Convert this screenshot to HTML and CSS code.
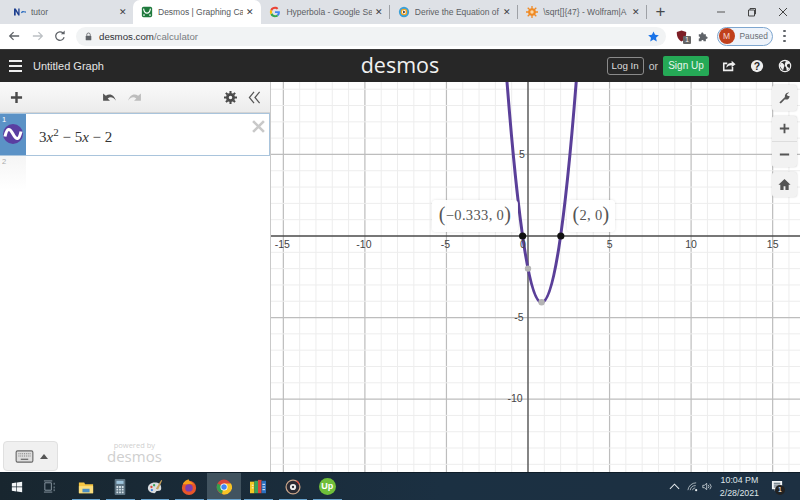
FILE: index.html
```html
<!DOCTYPE html>
<html lang="en">
<head>
<meta charset="utf-8">
<title>Desmos | Graphing Calculator</title>
<link rel="stylesheet" href="styles.css">
</head>
<body>
<div class="tabstrip">
  <div class="tab first">
    <svg class="favicon" viewBox="0 0 14 14"><path d="M0 11V3h2l3 5V3h1.500v8H5L2 6v5z" fill="#1d3f8f"/><path d="M8 7.500c1.500-2 3-2 5-1l1-.5v2c-2-1-3.500-1-5 .5z" fill="#2f6fc0"/></svg>
    <span class="tabtitle">tutor</span><span class="tabx">✕</span>
  </div>
  <div class="tab active">
    <svg class="favicon" viewBox="0 0 14 14"><rect x="1" y="1" width="12" height="12" rx="2" fill="#1f7a3d"/><path d="M3 3c1 7 7 7 8 0" fill="none" stroke="#fff" stroke-width="1.300"/><circle cx="3.500" cy="10.500" r="1" fill="#fff"/><circle cx="10.500" cy="10.500" r="1" fill="#fff"/></svg>
    <span class="tabtitle">Desmos | Graphing Ca</span><span class="tabx">✕</span>
  </div>
  <div class="tab">
    <svg class="favicon" viewBox="0 0 14 14"><path d="M12.700 7.200c0-.4 0-.8-.1-1.200H7v2.300h3.200c-.1.800-.6 1.400-1.200 1.800l1.900 1.500c1.100-1 1.800-2.500 1.800-4.400z" fill="#4285f4"/><path d="M7 13c1.600 0 3-.5 3.900-1.400L9 10.100c-.5.400-1.200.6-2 .6-1.500 0-2.800-1-3.300-2.400l-2 1.500C2.700 11.800 4.700 13 7 13z" fill="#34a853"/><path d="M3.700 8.300C3.500 7.600 3.500 6.400 3.700 5.700l-2-1.500c-.9 1.700-.9 3.900 0 5.600z" fill="#fbbc05"/><path d="M7 3.300c.9 0 1.600.3 2.200.9l1.700-1.700C9.900 1.600 8.600 1 7 1 4.700 1 2.700 2.200 1.700 4.200l2 1.500C4.200 4.300 5.500 3.300 7 3.300z" fill="#ea4335"/></svg>
    <span class="tabtitle">Hyperbola - Google Se</span><span class="tabx">✕</span><i class="tabsep"></i>
  </div>
  <div class="tab">
    <svg class="favicon" viewBox="0 0 14 14"><circle cx="7" cy="7" r="6" fill="#3aa0d8"/><circle cx="7" cy="7" r="3.800" fill="#f5a623"/><circle cx="7" cy="7" r="2.400" fill="#fff"/><path d="M6 5.200 9 7l-3 1.800z" fill="#333"/></svg>
    <span class="tabtitle">Derive the Equation of</span><span class="tabx">✕</span><i class="tabsep"></i>
  </div>
  <div class="tab">
    <svg class="favicon" viewBox="0 0 14 14"><g stroke="#f08a24" stroke-width="1.500"><path d="M7 0v14M0 7h14M2 2l10 10M12 2 2 12"/></g><circle cx="7" cy="7" r="4.500" fill="#f08a24"/><circle cx="7" cy="7" r="2" fill="#fbd9a8"/></svg>
    <span class="tabtitle">\sqrt[]{47} - Wolfram|A</span><span class="tabx">✕</span><i class="tabsep"></i>
  </div>
  <span class="newtab">+</span>
  <div class="winctl">
    <svg viewBox="0 0 10 10"><path d="M1 5h8" stroke="#555" stroke-width="1"/></svg>
    <svg viewBox="0 0 10 10"><path d="M1.500 3h6v6h-6zM3 3V1.500h5.500V7H7.500" fill="none" stroke="#444" stroke-width="1"/></svg>
    <svg viewBox="0 0 10 10"><path d="M1 1l8 8M9 1 1 9" stroke="#444" stroke-width="1"/></svg>
  </div>
</div>

<div class="toolbar">
  <svg class="navicon back" viewBox="0 0 14 14"><path d="M13 7H2M6.500 2.500 2 7l4.500 4.500" fill="none" stroke="#5f6368" stroke-width="1.500"/></svg>
  <svg class="navicon fwd" viewBox="0 0 14 14"><path d="M1 7h11M7.500 2.500 12 7l-4.500 4.500" fill="none" stroke="#bcc0c4" stroke-width="1.500"/></svg>
  <svg class="navicon" viewBox="0 0 14 14"><path d="M11.800 8.500A5 5 0 1 1 10.500 3.500" fill="none" stroke="#5f6368" stroke-width="1.500"/><path d="M8 5h4.500V.5z" fill="#5f6368"/></svg>
  <div class="omnibox">
    <svg class="lock" viewBox="0 0 10 12"><path d="M2.500 5V3.500a2.500 2.500 0 0 1 5 0V5" fill="none" stroke="#5f6368" stroke-width="1.200"/><rect x="1" y="5" width="8" height="6.500" rx="1" fill="#5f6368"/></svg>
    <span class="url"><b>desmos.com</b>/calculator</span>
    <svg class="star" viewBox="0 0 14 14"><path d="M7 .5l2 4.400 4.800.5-3.600 3.200 1 4.700L7 10.900l-4.200 2.400 1-4.700L.2 5.400 5 4.900z" fill="#1a73e8"/></svg>
  </div>
  <div class="extensions">
    <span class="ublock">
      <svg viewBox="0 0 14 15"><path d="M7 .5 13 2.500c0 6-1.500 9.500-6 12-4.500-2.500-6-6-6-12z" fill="#7d1f26"/></svg>
      <span class="badge">1</span>
    </span>
    <svg class="puzzle" viewBox="0 0 14 14"><path d="M1 4h3c-.5-3 3.500-3 3 0h3v3c3-.5 3 3.500 0 3v3H7c.5-2-3-2-2.500 0H1v-3.500c2 .5 2-3 0-2.500z" fill="#5f6368"/></svg>
    <div class="profile"><span class="avatar">M</span><span class="paused">Paused</span></div>
    <span class="kebab"><i></i><i></i><i></i></span>
  </div>
</div>

<header class="appbar">
  <div class="appleft">
    <span class="hamburger"><i></i><i></i><i></i></span>
    <span class="graphtitle">Untitled Graph</span>
  </div>
  <div class="wordmark">desmos</div>
  <div class="appright">
    <span class="login">Log In</span>
    <span class="or">or</span>
    <span class="signup">Sign Up</span>
    <svg class="appicon" viewBox="0 0 16 16"><path d="M12 9v4H2V5h4" fill="none" stroke="#eee" stroke-width="1.800"/><path d="M5 10c0-4 3-5.500 6-5.500V2l4.500 4L11 9.500V7C8.500 7 6.500 7.800 5 10z" fill="#eee"/></svg>
    <svg class="appicon" viewBox="0 0 16 16"><circle cx="8" cy="8" r="7" fill="#eee"/><text x="8" y="12" class="helpq">?</text></svg>
    <svg class="appicon" viewBox="0 0 16 16"><circle cx="8" cy="8" r="6.500" fill="#272727" stroke="#eee" stroke-width="1.300"/><path d="M3 5c2-1 3 0 3.500 1S8 7.500 7 9 6.500 13 5.500 12.500 3 9.500 2 8zM9 2c1 1 3 .5 4 2s-1 1.500-2 2-1 2 0 3 2 1 2 1-1 3-3 3.500c-.5-2 0-3-1-4S7.500 6 8 5s1-2 1-3z" fill="#eee"/></svg>
  </div>
</header>

<main class="workspace">
  <aside class="panel">
    <div class="paneltools">
      <svg class="plus" viewBox="0 0 14 14"><path d="M7 1v12M1 7h12" stroke="#4a4a4a" stroke-width="2.600"/></svg>
      <div class="undoredo">
        <svg viewBox="0 0 16 12"><path d="M1 1.500v8h7.500L6 7c3-2 6-1.500 9 2.500C13.500 4 9 .5 4 4z" fill="#555"/></svg>
        <svg viewBox="0 0 16 12"><path d="M15 1.500v8H7.500L10 7C7 5 4 5.500 1 9.500 2.500 4 7 .5 12 4z" fill="#bdbdbd"/></svg>
      </div>
      <svg class="gear" viewBox="0 0 14 14"><circle cx="7" cy="7" r="3.400" fill="none" stroke="#4a4a4a" stroke-width="3"/><path d="M7 0v14M0 7h14M2 2l10 10M12 2 2 12" stroke="#4a4a4a" stroke-width="2.200" stroke-dasharray="2.500 9 2.500"/></svg>
      <svg class="collapse" viewBox="0 0 14 14"><path d="M6.500 1 1.500 7l5 6M12.500 1l-5 6 5 6" fill="none" stroke="#555" stroke-width="1.300"/></svg>
    </div>
    <div class="expr">
      <div class="exprtab">
        <span class="exprnum">1</span>
        <svg class="wave" viewBox="0 0 20 20"><circle cx="10" cy="10" r="10" fill="#5a3ea1"/><path d="M2 12.500C4 3.500 6.500 3.500 10 10s6 6.500 8-2.500" fill="none" stroke="#fff" stroke-width="3"/></svg>
      </div>
      <div class="math">3<em>x</em><sup>2</sup> − 5<em>x</em> − 2</div>
      <svg class="exprclose" viewBox="0 0 12 12"><path d="M1 1l10 10M11 1 1 11" stroke="#c9c9c9" stroke-width="2.400"/></svg>
    </div>
    <div class="expr empty">
      <div class="exprtab"><span class="exprnum">2</span></div>
    </div>
    <div class="panelfoot">
      <div class="keyboard">
        <svg class="kbd" viewBox="0 0 20 14"><rect x="1" y="1" width="18" height="12" rx="1.500" fill="#ddd" stroke="#666" stroke-width="1.200"/><path d="M3.500 4h13M3.500 6.500h13" stroke="#777" stroke-width="1.200" stroke-dasharray="1 1"/><path d="M6 10h8" stroke="#666" stroke-width="1.300"/></svg>
        <i class="caret"></i>
      </div>
      <div class="powered"><span>powered by</span><strong>desmos</strong></div>
    </div>
  </aside>

  <section class="graph">
    <svg class="plot" viewBox="271 82 529 390" id="plot">
      <g id="grid"></g>
      <path class="curve" d="M507 82Q541.600 523 576.200 82"/>
      <circle class="pt-hole" cx="528" cy="268.600" r="3.200"/>
      <circle class="pt-hole" cx="541.600" cy="302.300" r="3.200"/>
      <circle class="pt-black" cx="522.600" cy="236" r="3.600"/>
      <circle class="pt-black" cx="560.800" cy="236" r="3.600"/>
      <g id="ticks"></g>
    </svg>
    <div class="tip tipleft"><span class="paren">(</span>−0.333, 0<span class="paren">)</span></div>
    <div class="tip tipright"><span class="paren">(</span>2, 0<span class="paren">)</span></div>
    <div class="graphtools">
      <div class="gbtn single"><svg viewBox="0 0 14 14"><path d="M1.500 12.500 7.500 6.500C7 4 8.500 1.500 12 1.500L9.500 3.800l1 1.700 2-.2c0 3-2.500 4.500-5 3.700L3 13.500z" fill="#555"/></svg></div>
      <div class="zoomgroup">
        <div class="gbtn"><svg viewBox="0 0 14 14"><path d="M7 2v10M2 7h10" stroke="#555" stroke-width="2"/></svg></div>
        <div class="gbtn"><svg viewBox="0 0 14 14"><path d="M2 7h10" stroke="#555" stroke-width="2"/></svg></div>
      </div>
      <div class="gbtn single"><svg viewBox="0 0 14 14"><path d="M7 1 .5 7.200H2.500V13H6V9h2v4h3.500V7.200h2z" fill="#555"/></svg></div>
    </div>
  </section>
</main>

<footer class="taskbar">
  <svg class="tb start" viewBox="0 0 14 14"><path d="M1 2.500 6.300 1.800V6.500H1zM7 1.700 13 1V6.500H7zM1 7.200h5.300v5L1 11.500zM7 7.200h6V13l-6-.8z" fill="#f2f5f7"/></svg>
  <svg class="tb taskview" viewBox="0 0 14 14"><path d="M2 3h7v8H2zM1 1h9M1 13h9M12 3v2M12 7v2M12 10v2" fill="none" stroke="#8d9ba5" stroke-width="1"/></svg>
  <span class="app running"><svg viewBox="0 0 18 16"><path d="M1 3h6l1 2h9v10H1z" fill="#f5c542"/><path d="M1 7h16v8H1z" fill="#fadd7e"/><rect x="5" y="10" width="8" height="4" fill="#4b8fc4"/></svg></span>
  <span class="app running"><svg viewBox="0 0 14 18"><rect x="1" y="0" width="12" height="18" rx="1" fill="#5d7382"/><rect x="3" y="2" width="8" height="3.500" fill="#9fc6de"/><path d="M3 8h2v2H3zM6 8h2v2H6zM9 8h2v2H9zM3 11h2v2H3zM6 11h2v2H6zM9 11h2v2H9zM3 14h2v2H3zM6 14h2v2H6zM9 14h2v2H9z" fill="#d7e3ea"/></svg></span>
  <span class="app running"><svg viewBox="0 0 18 18"><path d="M9 4c-5 0-8 3-8 6.500S5 16 8 16c2 0 1.500-2 3-2.500s5 .5 5-3.500S13 4 9 4z" fill="#d9dde0"/><circle cx="5" cy="9" r="1.300" fill="#d84a3b"/><circle cx="8" cy="7" r="1.300" fill="#3aa35a"/><circle cx="5.500" cy="12.500" r="1.300" fill="#3b7dd8"/><path d="M10 11 16 1l1 .7-4.500 10z" fill="#c9a25b"/></svg></span>
  <span class="app running"><svg viewBox="0 0 18 18"><circle cx="9" cy="10" r="8" fill="#e8562a"/><path d="M2 6c1-3 4-5.500 7-5.500-1 1.500 3 2.500 6 6.500-2-1.500-4-2-6-1z" fill="#f6a01a"/><circle cx="9" cy="10" r="4.200" fill="#7b3fb0"/></svg></span>
  <span class="app current"><svg viewBox="0 0 18 18"><circle cx="9" cy="9" r="8.300" fill="#d9453a"/><path d="M9 9 1.800 5a8.300 8.300 0 0 0 5 11.900z" fill="#33a04f"/><path d="M9 5h7.800a8.300 8.300 0 0 1-9.900 12z" fill="#f7c325"/><circle cx="9" cy="9" r="4" fill="#fff"/><circle cx="9" cy="9" r="3.100" fill="#4285f4"/></svg></span>
  <span class="app running"><svg viewBox="0 0 18 16"><rect x="0" y="2" width="5" height="13" fill="#f3c623"/><rect x="5" y="1" width="4" height="14" fill="#3aa35a"/><rect x="9" y="0" width="4" height="15" fill="#d9453a"/><rect x="13" y="1" width="5" height="14" fill="#2a6fc0"/><path d="M14 5h3M14 8h3M14 11h3M2 6h2M2 9h2" stroke="#fff" stroke-width="1"/></svg></span>
  <span class="app running"><svg viewBox="0 0 18 18"><circle cx="9" cy="9" r="7.800" fill="#2a2a33" stroke="#c9a58a" stroke-width="1.400"/><circle cx="9" cy="9" r="3.500" fill="#eee"/><circle cx="9" cy="9" r="1.300" fill="#2a2a33"/><path d="M13 2a8 8 0 0 1 3 4" fill="none" stroke="#d9453a" stroke-width="1.400"/></svg></span>
  <span class="app running"><span class="upwork">Up</span></span>
  <div class="tray">
    <svg class="trayicon chevron" viewBox="0 0 12 12"><path d="M1 8.500 6 3.500l5 5" fill="none" stroke="#e6ebee" stroke-width="1.100"/></svg>
    <svg class="trayicon" viewBox="0 0 12 12"><path d="M1 10a9 9 0 0 1 9-8M3.500 10a6 6 0 0 1 6-5M6 10a3 3 0 0 1 3-2.500" fill="none" stroke="#aeb9c0" stroke-width="1"/><circle cx="10" cy="10" r="1.200" fill="#e6ebee"/></svg>
    <svg class="trayicon" viewBox="0 0 14 12"><path d="M1 4.500h2L6 2v8L3 7.500H1z" fill="none" stroke="#d5dce0" stroke-width="1"/><path d="M8 4a3 3 0 0 1 0 4M10 2.500a5 5 0 0 1 0 7" fill="none" stroke="#d5dce0" stroke-width="1"/></svg>
    <div class="clock"><span>10:04 PM</span><span>2/28/2021</span></div>
    <span class="notify">
      <svg viewBox="0 0 14 14"><path d="M1 1h11v9H6l-2 2v-2H1z" fill="#f2f5f7"/><path d="M3 3.500h7M3 5.500h7M3 7.500h5" stroke="#1d3042" stroke-width=".8"/></svg>
      <span class="notifybadge">1</span>
    </span>
  </div>
</footer>
<script src="plot.js"></script>
</body>
</html>
```

FILE: plot.js
```js
var NS = "http://www.w3.org/2000/svg";
var X0 = 528, Y0 = 236, U = 16.31;
var grid = document.getElementById("grid");
var ticks = document.getElementById("ticks");
function line(x1, y1, x2, y2, cls) {
  var l = document.createElementNS(NS, "line");
  l.setAttribute("x1", x1); l.setAttribute("y1", y1);
  l.setAttribute("x2", x2); l.setAttribute("y2", y2);
  l.setAttribute("class", cls);
  grid.appendChild(l);
}
function label(x, y, s) {
  var t = document.createElementNS(NS, "text");
  t.setAttribute("x", x); t.setAttribute("y", y);
  t.setAttribute("class", "tick");
  t.textContent = s;
  ticks.appendChild(t);
}
for (var i = -16; i <= 17; i++) {
  var x = X0 + i * U;
  if (i !== 0) line(x, 82, x, 472, i % 5 === 0 ? "major" : "minor");
}
for (var j = -14; j <= 9; j++) {
  var y = Y0 - j * U;
  if (j !== 0) line(271, y, 800, y, j % 5 === 0 ? "major" : "minor");
}
line(528, 82, 528, 472, "yaxis");
line(271, Y0, 800, Y0, "axis");
[-15, -10, -5, 5, 10, 15].forEach(function (v) {
  label(X0 + v * U - (v < 0 ? 1 : 0), Y0 + 12, String(v));
});
label(X0 - 5, Y0 + 12, "0");
label(X0 - 6, Y0 - 78, "5");
label(X0 - 9, Y0 + 85, "-5");
label(X0 - 13, Y0 + 166, "-10");
```

FILE: styles.css
```css
* { box-sizing: border-box; }
html, body { margin: 0; height: 100%; }
body {
  width: 800px; height: 500px; overflow: hidden;
  display: flex; flex-direction: column;
  font-family: "Liberation Sans", Arial, sans-serif;
  background: #fff;
}
svg { display: block; flex: none; }

/* tab strip */
.tabstrip {
  height: 24px; flex: none; background: #dee1e6;
  display: flex; align-items: center; position: relative;
}
.tab {
  width: 128.400px; height: 24px; flex: none; padding: 0 5px 0 8px;
  display: flex; align-items: center; position: relative;
  font-size: 8.500px; color: #5b5e63;
}
.tab.first { width: 133px; padding: 0 4px 0 14px; }
.tab.active { background: #fff; border-radius: 7px 7px 0 0; color: #55585c; }
.favicon { width: 12px; height: 12px; margin-right: 5px; }
.tabtitle { flex: 1; min-width: 0; white-space: nowrap; overflow: hidden; }
.tabx { width: 12px; margin-left: 1px; text-align: center; font-size: 9px; color: #3c4043; }
.tabsep { position: absolute; right: 0; top: 5px; height: 14px; width: 1px; background: #9ea1a6; }
.newtab { margin-left: 8px; width: 12px; text-align: center; font-size: 17px; line-height: 24px; color: #45484c; }
.winctl { margin-left: auto; display: flex; gap: 21px; padding-right: 12px; }
.winctl svg { width: 10px; height: 10px; }

/* browser toolbar */
.toolbar {
  height: 26px; flex: none; background: #fff; padding: 0 0 1px 8px;
  display: flex; align-items: center; border-bottom: 1px solid #3a3a3a;
}
.navicon { width: 12px; height: 12px; margin-right: 10px; }
.navicon.back { margin-right: 12px; }
.omnibox {
  width: 590px; height: 19px; border-radius: 10px; background: #f1f3f4;
  display: flex; align-items: center; padding: 0 7px 0 9px;
}
.lock { width: 7px; height: 9px; margin-right: 7px; }
.url { flex: 1; font-size: 9.700px; color: #7a7d81; }
.url b { font-weight: 400; color: #303134; }
.star { width: 11px; height: 11px; }
.extensions { display: flex; align-items: center; margin-left: 10px; flex: 1; }
.ublock { position: relative; width: 12px; height: 13px; margin-right: 10px; }
.ublock svg { width: 11px; height: 12px; }
.badge {
  position: absolute; left: 7px; top: 6px; width: 8px; height: 8px; background: #666; color: #fff;
  font-size: 6.500px; line-height: 8px; text-align: center; border-radius: 1px;
}
.puzzle { width: 11px; height: 11px; margin-right: 7.500px; }
.profile {
  width: 56px; height: 19px; border: 1px solid #7ea6cf; border-radius: 10px; background: #eef3fa;
  display: flex; align-items: center; padding-left: 1px;
}
.avatar {
  width: 16px; height: 16px; border-radius: 50%; background: #c0401c; color: #f5d9cf;
  font-size: 8.500px; line-height: 16px; text-align: center;
}
.paused { margin-left: 5px; font-size: 8.400px; color: #6a6f75; }
.kebab { display: flex; flex-direction: column; gap: 2.500px; margin-left: 10.500px; }
.kebab i { width: 2.500px; height: 2.500px; border-radius: 50%; background: #5f6368; }

/* desmos bar */
.appbar {
  height: 32px; flex: none; background: #272727; position: relative;
  display: flex; align-items: center; justify-content: space-between;
}
.appleft { display: flex; align-items: center; padding-left: 9px; }
.hamburger { display: flex; flex-direction: column; gap: 3px; width: 13px; margin-right: 11px; }
.hamburger i { height: 2px; background: #eee; }
.graphtitle { font-size: 11px; color: #e4e4e4; }
.wordmark {
  position: absolute; left: 0; right: 0; top: -1px; text-align: center;
  font-size: 21.500px; line-height: 32px; color: #f0f0f0;
  font-family: "Open Sans", "Liberation Sans", sans-serif; font-weight: 400;
}
.appright { display: flex; align-items: center; position: relative; padding-right: 8px; }
.login {
  width: 37px; height: 18px; border: 1px solid #8a8a8a; border-radius: 3px;
  color: #ddd; font-size: 9.800px; line-height: 16px; text-align: center;
}
.or { color: #ccc; font-size: 10.500px; margin: 0 5px; }
.signup {
  width: 46px; height: 20px; border-radius: 2px; background: #25a956; color: #e8f6ed;
  font-size: 10px; line-height: 20px; text-align: center; margin-right: 13px;
}
.appicon { width: 14px; height: 14px; margin-right: 14px; }
.appicon:last-child { margin-right: 0; }
.helpq { font: bold 12px "Liberation Sans", sans-serif; fill: #272727; text-anchor: middle; }

/* workspace */
.workspace { flex: 1; min-height: 0; display: flex; }
.panel {
  width: 271px; flex: none; display: flex; flex-direction: column;
  border-right: 1px solid #c9c9c9; background: #fff;
}
.paneltools {
  height: 31px; flex: none; background: linear-gradient(#fafafa, #ececec);
  display: flex; align-items: center; padding: 0 7px 0 10px; border-bottom: 1px solid #d4d4d4;
}
.plus { width: 13px; height: 13px; }
.undoredo { display: flex; gap: 10px; margin-left: 79px; }
.undoredo svg { width: 15px; height: 11px; }
.gear { width: 13px; height: 13px; margin-left: 81.500px; }
.collapse { width: 13px; height: 13px; margin-left: 11.500px; }
.expr { height: 43px; flex: none; display: flex; position: relative; border: 1px solid #a9c4dc; border-left: 0; }
.exprtab { width: 26px; flex: none; background: #5b92c6; position: relative; display: flex; align-items: center; justify-content: center; }
.exprnum { position: absolute; left: 2px; top: 1px; font-size: 7.500px; color: #fff; }
.wave { width: 20px; height: 20px; margin-top: -2px; }
.math {
  margin: 13px 0 0 13px; font-family: "Liberation Serif", serif; font-size: 15px;
  color: #333; white-space: nowrap; line-height: 20px;
}
.math em { font-style: italic; }
.math sup { font-size: 11px; line-height: 0; vertical-align: 6.500px; }
.exprclose { position: absolute; right: 4px; top: 6px; width: 13px; height: 13px; }
.expr.empty { height: 34px; border: 0; }
.expr.empty .exprtab { background: linear-gradient(#f5f5f5, #fff); }
.expr.empty .exprnum { color: #aaa; }
.panelfoot { flex: 1; display: flex; align-items: flex-end; padding: 0 0 1px 3px; position: relative; }
.keyboard {
  width: 55px; height: 30px; background: #f0f0f0; border: 1px solid #e0e0e0; border-radius: 4px;
  display: flex; align-items: center; gap: 6px; padding-left: 11px;
}
.kbd { width: 19px; height: 13px; }
.caret { width: 0; height: 0; border: 4px solid transparent; border-top: 0; border-bottom: 5px solid #555; }
.powered {
  margin-left: 49px; margin-bottom: 9.500px; display: flex; flex-direction: column; align-items: center;
  color: #cfcfcf; font-family: "Open Sans", sans-serif; line-height: 1;
}
.powered span { font-size: 7.500px; }
.powered strong { font-weight: 400; font-size: 15px; line-height: 12px; }

/* graph */
.graph { flex: 1; min-width: 0; position: relative; background: #fff; }
.plot { width: 529px; height: 390px; }
.plot .minor { stroke: #ededed; stroke-width: 1; }
.plot .major { stroke: #bdbdbd; stroke-width: 1.200; }
.plot .axis { stroke: #4a4a4a; stroke-width: 1.500; }
.plot .yaxis { stroke: #666; stroke-width: 1.600; }
.curve { fill: none; stroke: #5a3f99; stroke-width: 3; }
.pt-hole { fill: #b4b4b4; }
.pt-black { fill: #111; }
.tick { font: 10.500px "Liberation Sans", sans-serif; fill: #444; text-anchor: middle; }
.tip {
  position: absolute; background: rgba(255,255,255,.95); border-radius: 4px;
  box-shadow: 0 0 3px rgba(0,0,0,.12); color: #555; height: 32px; line-height: 30px;
  font-family: "Liberation Serif", serif; font-size: 14.500px; letter-spacing: .35px; text-align: center;
  white-space: nowrap;
}
.paren { font-size: 20px; font-weight: 400; line-height: 0; vertical-align: -1px; }
.tipleft { left: 161px; top: 118px; width: 86px; }
.tipright { left: 296px; top: 118px; width: 48px; }
.graphtools { position: absolute; right: 3px; top: 3px; display: flex; flex-direction: column; gap: 5px; }
.gbtn {
  width: 25px; height: 26px; background: #f2f2f2; display: flex; align-items: center; justify-content: center;
}
.gbtn svg { width: 13px; height: 13px; }
.single { border-radius: 3px; box-shadow: 0 0 2px rgba(0,0,0,.2); height: 25.500px; }
.zoomgroup { border-radius: 3px; box-shadow: 0 0 2px rgba(0,0,0,.2); overflow: hidden; display: flex; flex-direction: column; gap: 1px; background: #ddd; }
.zoomgroup .gbtn { height: 25px; }

/* taskbar */
.taskbar {
  height: 28px; flex: none; background: linear-gradient(90deg, #18262f, #1b3042 55%, #1d3042);
  display: flex; align-items: center; position: relative;
  border-top: 1px solid #0f1d29;
}
.tb.start { width: 12px; height: 12px; margin-left: 11px; }
.tb.taskview { width: 13px; height: 13px; margin-left: 20px; margin-right: 12.500px; }
.app {
  width: 34.500px; height: 28px; flex: none; display: flex; align-items: center; justify-content: center;
  position: relative;
}
.app svg { width: 16px; height: 16px; }
.app.running::after {
  content: ""; position: absolute; left: 3px; right: 3px; bottom: 0; height: 2px; background: #6aa5d0;
}
.app.current { background: #41535f; }
.app.current::after {
  content: ""; position: absolute; left: 0; right: 0; bottom: 0; height: 2px; background: #6aa5d0;
}
.upwork {
  width: 17px; height: 17px; border-radius: 50%; background: #6fbf3a; color: #fff;
  font-size: 9px; font-weight: 700; line-height: 17px; text-align: center;
}
.tray { margin-left: auto; display: flex; align-items: center; padding-right: 15px; }
.trayicon { width: 11px; height: 11px; margin-right: 4px; }
.trayicon.chevron { margin-right: 7px; }
.clock {
  display: flex; flex-direction: column; align-items: center; color: #dfe5e9;
  font-size: 8.800px; line-height: 13px; margin: 0 12px 0 3px;
}
.notify { position: relative; width: 14px; height: 14px; }
.notify svg { width: 13px; height: 13px; }
.notifybadge {
  position: absolute; left: 4px; top: 5px; width: 10px; height: 10px; border-radius: 50%;
  background: #222; color: #fff; font-size: 7px; line-height: 10px; text-align: center;
}
```
